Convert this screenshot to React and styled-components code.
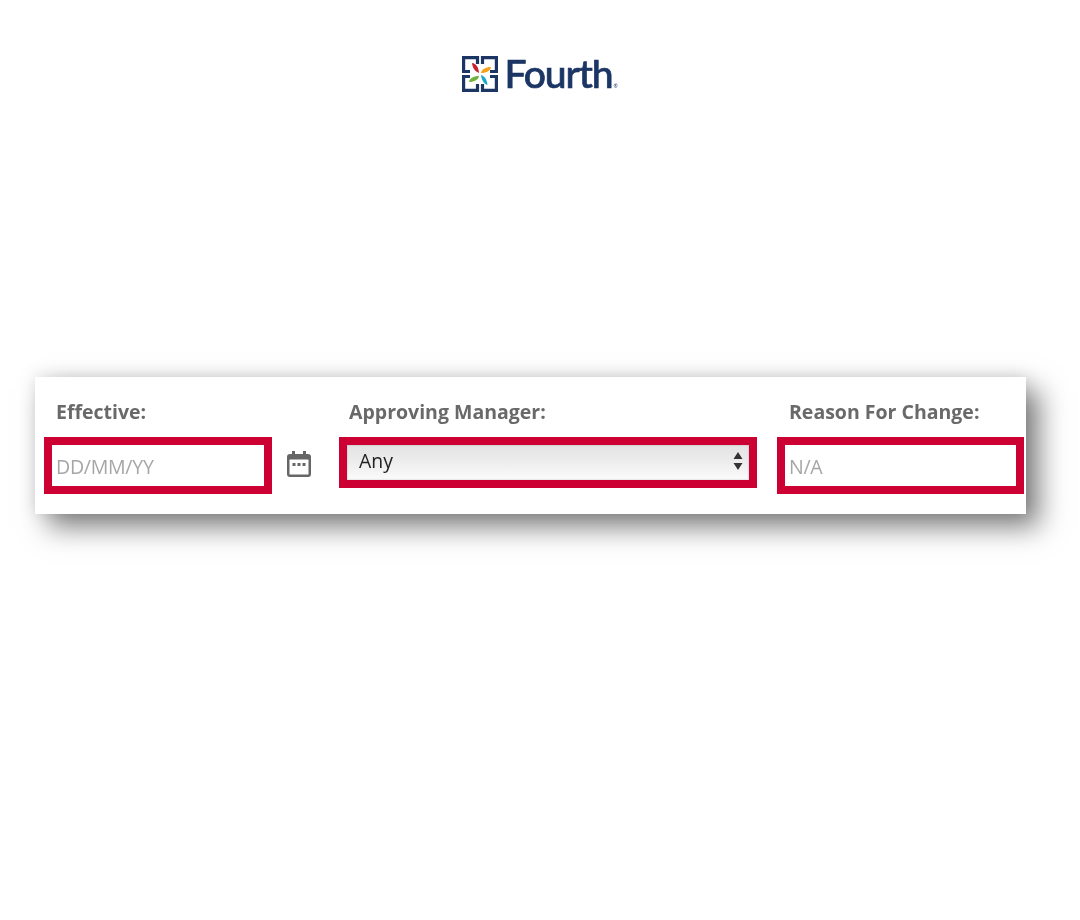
import React from "react";
import styled, { createGlobalStyle } from "styled-components";

const Global = createGlobalStyle`
  html, body { margin: 0; padding: 0; background: #fff; }
  body { font-family: "Open Sans", "Liberation Sans", sans-serif; }
`;

const Page = styled.main`
  width: 1080px;
  height: 920px;
  box-sizing: border-box;
  padding-top: 54px;
  overflow: hidden;
`;

const LogoRow = styled.header`
  display: flex;
  justify-content: center;
  align-items: center;
  gap: 6px;
  height: 40px;
  filter: blur(0.5px);
`;

const Wordmark = styled.span`
  font-family: "Lato", "Open Sans", sans-serif;
  font-size: 39px;
  font-weight: 500;
  line-height: 40px;
  letter-spacing: -1.1px;
  color: #1b3564;
  -webkit-text-stroke: 0.7px #1b3564;
  display: flex;
  align-items: baseline;
  margin-top: -2px;
`;

const Reg = styled.sup`
  font-size: 5px;
  line-height: 1;
  letter-spacing: 0;
  margin-left: 1px;
  color: #1b3564;
  -webkit-text-stroke: 0;
`;

const Card = styled.section`
  margin: 283px 0 0 35px;
  width: 991px;
  height: 137px;
  box-sizing: border-box;
  background: #fff;
  padding: 23px 0 0 9px;
  display: flex;
  align-items: flex-start;
  box-shadow: 13px 13px 26px rgba(0, 0, 0, 0.5), 0 -2px 16px rgba(0, 0, 0, 0.1);
`;

const Field = styled.div`
  display: flex;
  flex-direction: column;
  flex: none;
  width: ${(p) => p.$width}px;
  margin-right: ${(p) => p.$gap || 0}px;
`;

const Label = styled.label`
  font-family: "Open Sans", sans-serif;
  font-size: 19.5px;
  font-weight: 700;
  line-height: 24px;
  height: 24px;
  color: #696969;
  padding-left: ${(p) => p.$indent}px;
  margin-bottom: 13px;
  white-space: nowrap;
  filter: blur(0.6px);
`;

const Row = styled.div`
  display: flex;
  align-items: center;
`;

const TextBox = styled.div`
  box-sizing: border-box;
  flex: none;
  width: ${(p) => p.$width}px;
  height: 57px;
  border: 8px solid #cc0033;
  background: #fff;
  padding-left: ${(p) => p.$indent}px;
  font-family: "Open Sans", sans-serif;
  font-size: 19.6px;
  line-height: 44px;
  letter-spacing: -0.3px;
  color: #a6a6a6;
`;

const Placeholder = styled.span`
  display: block;
  filter: blur(0.5px);
`;

const SelectBox = styled.div`
  box-sizing: border-box;
  width: 418px;
  height: 51px;
  border: 8px solid #cc0033;
  background: linear-gradient(#e4e4e4, #ececec 45%, #fbfbfb);
  box-shadow: inset 0 0 2px rgba(0, 0, 0, 0.25);
  display: flex;
  align-items: center;
  justify-content: space-between;
  padding: 0 5px 4px 12px;
  font-family: "Open Sans", sans-serif;
  font-size: 19.4px;
  color: #222;
`;

const SelectValue = styled.span`
  filter: blur(0.4px);
`;

const CalendarButton = styled.span`
  display: flex;
  margin: -3px 0 0 14px;
  filter: blur(0.4px);
`;

const Calendar = () => (
  <svg width="26" height="28" viewBox="0 0 26 28" aria-hidden="true">
    <path fill="#666" d="M6 1h3v3h8V1h3v3h2a3 3 0 0 1 3 3v17a3 3 0 0 1-3 3H4a3 3 0 0 1-3-3V7a3 3 0 0 1 3-3h2z" />
    <rect x="3.5" y="9.5" width="19" height="15" rx="0.5" fill="#fff" />
    <rect x="6.5" y="13" width="3" height="3" fill="#666" />
    <rect x="11.5" y="13" width="3" height="3" fill="#666" />
    <rect x="16.500" y="13" width="3" height="3" fill="#666" />
  </svg>
);

const Arrows = () => (
  <svg width="12" height="22" viewBox="0 0 12 22" aria-hidden="true">
    <path fill="#333" d="M6 2l4.500 7h-9zM1.500 13h9L6 20z" />
  </svg>
);

const Logo = () => (
  <svg width="36" height="36" viewBox="0 0 36 36" aria-hidden="true">
    <g fill="none" stroke="#1b3564" strokeWidth="3.2">
      <path d="M15.500 8C15.500 6 15.500 4 15.500 1.600H1.600V15.500H8" />
      <path d="M20.500 8C20.500 6 20.500 4 20.500 1.600H34.400V15.500H28" />
      <path d="M15.500 28V34.400H1.600V20.500H8" />
      <path d="M20.500 28V34.400H34.400V20.500H28" />
    </g>
    <path fill="#c8202f" d="M10 7c4 .5 6.500 4 7 10-4-1.500-6.500-5-7-10z" />
    <path fill="#f5a11c" d="M29 11c-.5 3.500-4 6-10 6 .5-3.500 4.500-6 10-6z" />
    <path fill="#6fb33f" d="M7 26c.5-3.500 4-6 10-6-.5 3.500-4.500 6-10 6z" />
    <path fill="#19a7c9" d="M19 19c3.500 1 6 4.500 6.500 10-3.500-1-6-5-6.500-10z" />
  </svg>
);

export default function App() {
  return (
    <Page>
      <Global />
      <LogoRow>
        <Logo />
        <Wordmark>
          Fourth<Reg>®</Reg>
        </Wordmark>
      </LogoRow>
      <Card>
        <Field $width={295}>
          <Label $indent={12}>Effective:</Label>
          <Row>
            <TextBox $width={228} $indent={4}><Placeholder>DD/MM/YY</Placeholder></TextBox>
            <CalendarButton>
              <Calendar />
            </CalendarButton>
          </Row>
        </Field>
        <Field $width={418} $gap={20}>
          <Label $indent={10}>Approving Manager:</Label>
          <SelectBox>
            <SelectValue>Any</SelectValue>
            <Arrows />
          </SelectBox>
        </Field>
        <Field $width={247}>
          <Label $indent={12}>Reason For Change:</Label>
          <TextBox $width={247} $indent={4}><Placeholder>N/A</Placeholder></TextBox>
        </Field>
      </Card>
    </Page>
  );
}
